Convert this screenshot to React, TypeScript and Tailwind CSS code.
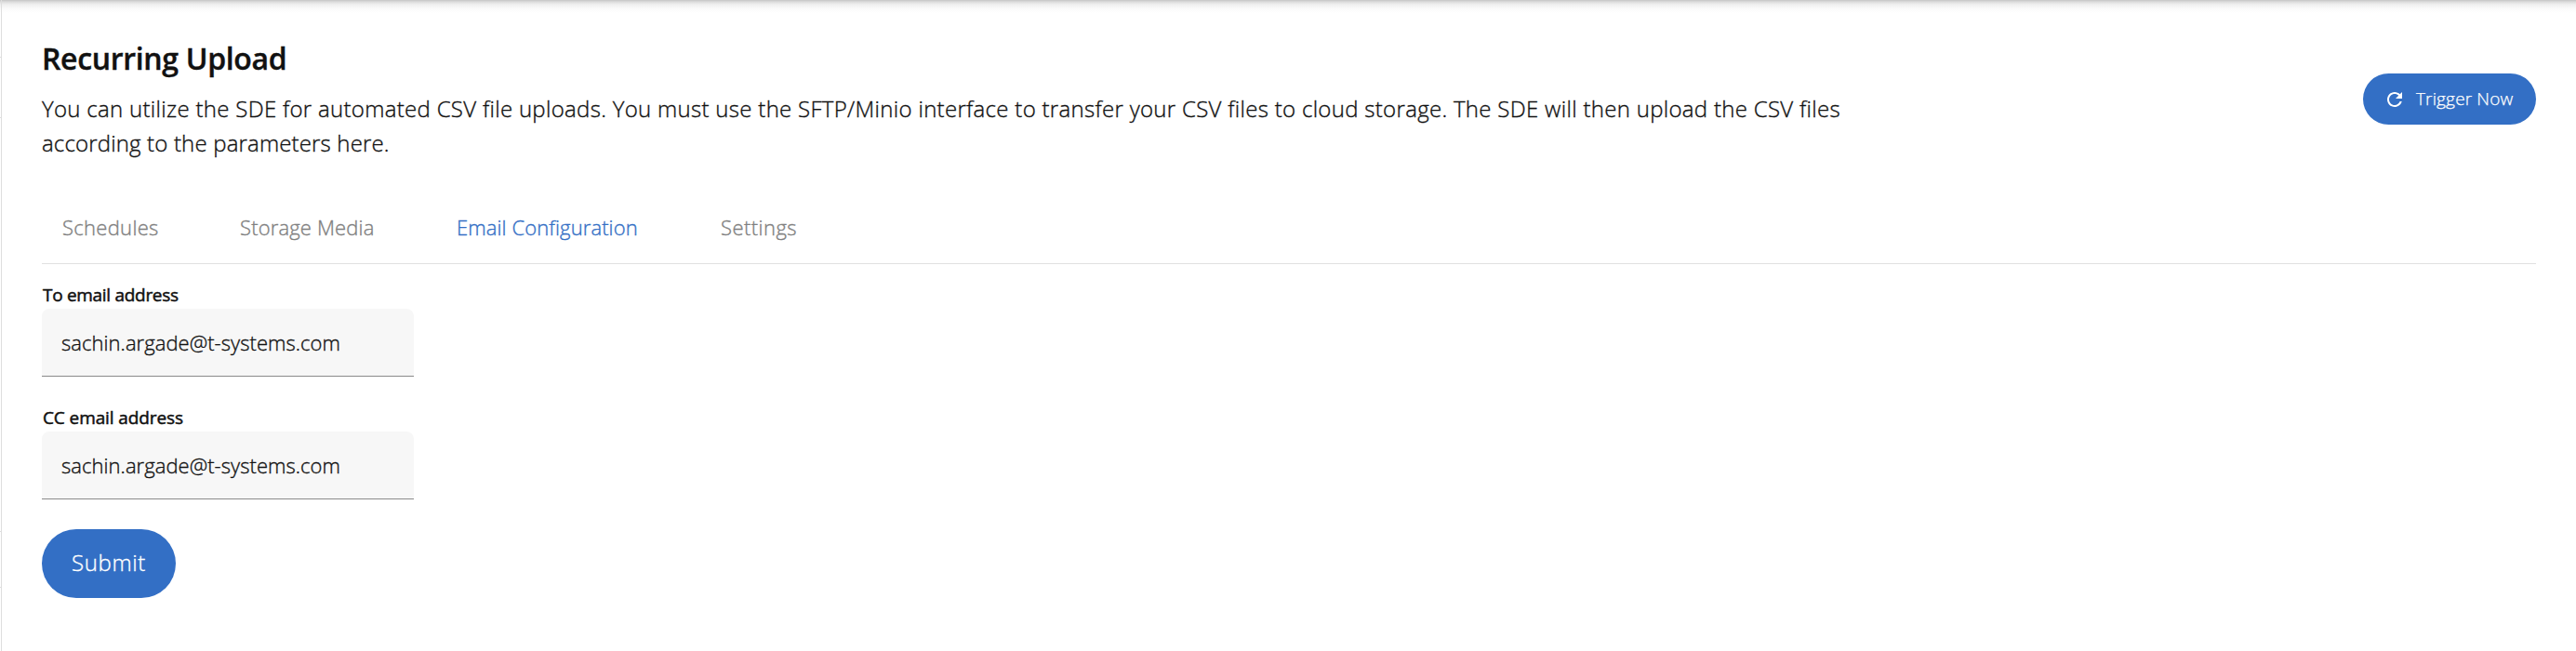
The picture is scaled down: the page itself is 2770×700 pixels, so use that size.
const tabs = [
  { label: "Schedules", width: "w-[145px]", spacing: "tracking-[0.3px]" },
  { label: "Storage Media", width: "w-[187px]", spacing: "tracking-[0.15px]" },
  { label: "Email Configuration", width: "w-[238px]", spacing: "tracking-[0.1px]", active: true },
  { label: "Settings", width: "w-[127px]", spacing: "tracking-[0.45px]" },
];

function Field({ label, spacing }: { label: string; spacing: string }) {
  return (
    <label className="block w-[400px]">
      <span className={`block h-7 whitespace-nowrap pl-px text-[19px] leading-[26px] font-normal [-webkit-text-stroke:0.5px_#111111] ${spacing}`}>{label}</span>
      <input
        type="text"
        defaultValue="sachin.argade@t-systems.com"
        className="block h-[73px] w-full rounded-t-lg border-b border-[#8a8a8a] bg-[#f7f7f7] px-[21px] pb-px text-[22px] font-light tracking-[0.05px] outline-none [-webkit-text-stroke:0.35px]"
      />
    </label>
  );
}

export default function App() {
  return (
    <div className="flex h-[700px] w-full bg-white bg-[linear-gradient(to_bottom,#c4c4c4_0px,#dcdcdc_2px,#f0f0f0_5px,#fafafa_9px,#ffffff_14px)] font-['Open_Sans',sans-serif] text-[#111111]">
      <div className="flex w-[2px] shrink-0 flex-col border-r border-[#dedede]">
        <div className="mt-[61px] h-px bg-[#dedede]" />
        <div className="mt-16 h-px bg-[#dedede]" />
        <div className="mt-[444px] h-px bg-[#dedede]" />
        <div className="mt-[59px] h-px bg-[#dedede]" />
      </div>
      <main className="w-full pr-[43px] pl-[43px]">
        <header className="flex items-start justify-between">
          <div className="pt-[41px]">
            <h1 className="h-11 text-[32px] leading-[44px] font-semibold whitespace-nowrap tracking-[-0.33px] [-webkit-text-stroke:0.4px]">Recurring Upload</h1>
            <p className="mt-[13px] text-[24px] leading-[37px] font-light whitespace-nowrap [-webkit-text-stroke:0.35px]">
              <span className="tracking-[0.3px]">You can utilize the SDE for automated CSV file uploads. You must use the SFTP/Minio interface to transfer your CSV files to cloud storage. The SDE will then upload the CSV files</span>
              <br />
              <span className="tracking-[0.16px]">according to the parameters here.</span>
            </p>
          </div>
          <button className="mt-[79px] flex h-[55px] w-[186px] items-center rounded-full bg-[#336fc5] pl-[22px] text-white">
            <svg viewBox="0 0 24 24" className="size-6 shrink-0" fill="currentColor">
              <path d="M17.65 6.35C16.2 4.9 14.21 4 12 4c-4.42 0-7.99 3.58-7.99 8s3.57 8 7.99 8c3.73 0 6.84-2.55 7.73-6h-2.08c-.82 2.33-3.04 4-5.65 4-3.31 0-6-2.69-6-6s2.69-6 6-6c1.66 0 3.14.69 4.22 1.78L13 11h7V4l-2.35 2.35z" />
            </svg>
            <span className="ml-[11px] pb-px text-[19px] leading-7 font-light tracking-[0.15px] whitespace-nowrap [-webkit-text-stroke:0.25px]">Trigger Now</span>
          </button>
        </header>
        <nav className="mt-9 flex h-[76px] items-center gap-[46px] border-b border-[#e0e0e0] text-[22px] font-light">
          {tabs.map((tab) => (
            <button
              key={tab.label}
              className={`h-full shrink-0 pb-0.5 pl-[22px] text-left whitespace-nowrap [-webkit-text-stroke:0.35px] ${tab.width} ${tab.spacing} ${tab.active ? "text-[#336fc5]" : "text-[#808080]"}`}
            >
              {tab.label}
            </button>
          ))}
        </nav>
        <form className="flex flex-col items-start pt-5">
          <Field label="To email address" spacing="tracking-[-0.3px]" />
          <div className="h-[31px]" />
          <Field label="CC email address" spacing="tracking-[-0.1px]" />
          <button type="button" className="mt-8 h-[74px] w-36 rounded-full bg-[#336fc5] pb-0.5 text-[24px] font-light tracking-[0.6px] text-white [-webkit-text-stroke:0.35px]">
            Submit
          </button>
        </form>
      </main>
    </div>
  );
}
